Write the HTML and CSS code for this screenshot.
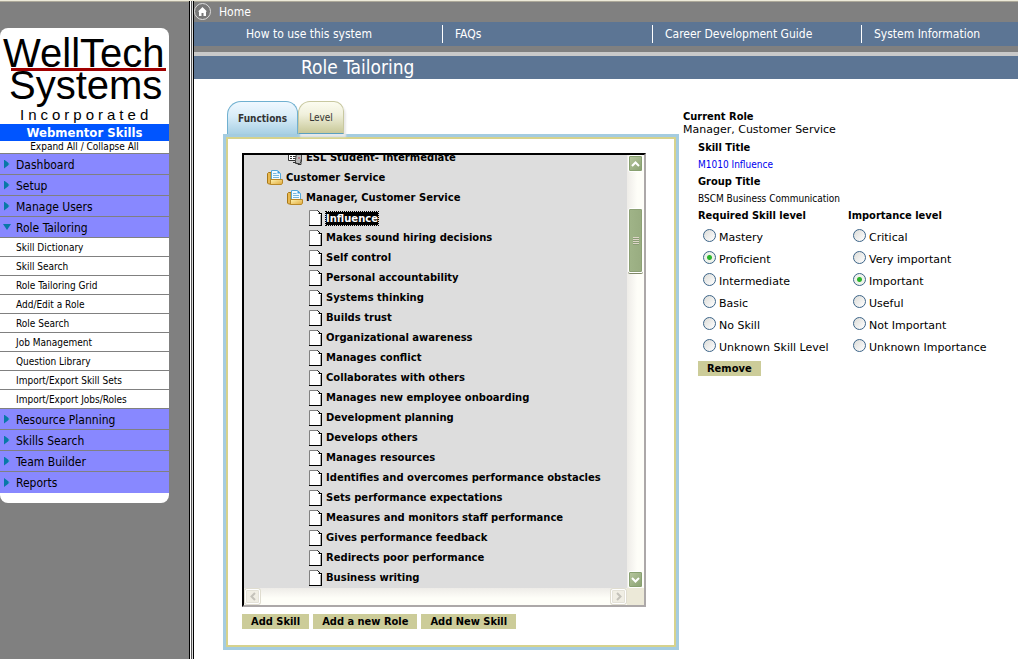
FILE: index.html
```html
<!DOCTYPE html>
<html lang="en">
<head>
<meta charset="utf-8">
<title>Role Tailoring</title>
<link rel="stylesheet" href="styles.css">
</head>
<body>
<svg class="defs" aria-hidden="true">
  <defs>
    <linearGradient id="gold" x1="0" y1="0" x2="1" y2="1"><stop offset="0" stop-color="#fff3b0"/><stop offset="1" stop-color="#e0a838"/></linearGradient>
    <symbol id="folder" viewBox="0 0 16 16">
      <path d="M.5 3.500l1-1h2.500v11.500h-2.500l-1-1z" fill="#e8b850" stroke="#a87818"/>
      <path d="M4.500 .5h6l3 3v7h-9z" fill="#f4fbff" stroke="#58a8d8"/>
      <path d="M10.500 .5v3h3z" fill="#38a0e8"/>
      <path d="M6 3.500h3.500M6 5.500h6M6 7.500h6" stroke="#78b8e0"/>
      <path d="M3.500 9.500h12v3.500l-1 1.500h-11z" fill="url(#gold)" stroke="#b88828"/>
    </symbol>
    <symbol id="page" viewBox="0 0 13 16">
      <path d="M.5 .5h8.500l3 3v12h-11.500z" fill="#fff"/>
      <path d="M.5 15V.5H9" fill="none" stroke="#808080"/>
      <path d="M8.500 .5l4 4M9.500 3.500h3M12.500 3v12.500M0 15.500h13" fill="none" stroke="#000"/>
      <path d="M11.500 5v10" stroke="#b0b0b0"/>
    </symbol>
    <symbol id="group" viewBox="0 0 16 16">
      <path d="M1.500 1.500h10v9h-10z" fill="#fff" stroke="#333"/>
      <path d="M3 4.500h2M6 4.500h3M3 6.500h2M6 6.500h3M3 8.500h2M6 8.500h3" stroke="#333"/>
      <path d="M9.500 2.500h5v9l-2 2h-4v-3z" fill="#b8b8b8" stroke="#444"/>
      <path d="M6 12.500h3l2 2h3v-5" fill="none" stroke="#333"/><path d="M11 8h2" stroke="#b04050"/>
    </symbol>
  </defs>
</svg>
<div class="page">
  <aside class="sidebar">
    <div class="card">
      <svg class="logo" viewBox="0 0 169 96" role="img" aria-label="WellTech Systems Incorporated">
        <text class="logo-big" x="3" y="39">WellTech</text>
        <rect x="11" y="40" width="155" height="3" fill="#a00000"/>
        <text class="logo-big" x="9" y="71">Systems</text>
        <text class="logo-small" x="20" y="92">Incorporated</text>
      </svg>
      <div class="brand">Webmentor Skills</div>
      <div class="expand"><a href="#">Expand All</a> / <a href="#">Collapse All</a></div>
      <nav class="menu">
        <a class="top" href="#"><i class="arrow"></i>Dashboard</a>
        <a class="top" href="#"><i class="arrow"></i>Setup</a>
        <a class="top" href="#"><i class="arrow"></i>Manage Users</a>
        <a class="top" href="#"><i class="arrow open"></i>Role Tailoring</a>
        <a class="sub" href="#">Skill Dictionary</a>
        <a class="sub" href="#">Skill Search</a>
        <a class="sub" href="#">Role Tailoring Grid</a>
        <a class="sub" href="#">Add/Edit a Role</a>
        <a class="sub" href="#">Role Search</a>
        <a class="sub" href="#">Job Management</a>
        <a class="sub" href="#">Question Library</a>
        <a class="sub" href="#">Import/Export Skill Sets</a>
        <a class="sub" href="#">Import/Export Jobs/Roles</a>
        <a class="top" href="#"><i class="arrow"></i>Resource Planning</a>
        <a class="top" href="#"><i class="arrow"></i>Skills Search</a>
        <a class="top" href="#"><i class="arrow"></i>Team Builder</a>
        <a class="top" href="#"><i class="arrow"></i>Reports</a>
      </nav>
    </div>
  </aside>
  <div class="splitter"></div>
  <main class="main">
    <header>
      <a class="home" href="#">
        <svg width="17" height="17" viewBox="0 0 17 17" aria-hidden="true"><circle cx="8.500" cy="8.500" r="8" fill="#787878" stroke="#ddd"/><path d="M8.500 4L13 8.500H12V13H9.500v-3h-2v3H5V8.500H4z" fill="#fff"/></svg>
        Home
      </a>
      <nav class="links">
        <a href="#">How to use this system</a>
        <a href="#">FAQs</a>
        <a href="#">Career Development Guide</a>
        <a href="#">System Information</a>
      </nav>
      <h1 class="title">Role Tailoring</h1>
    </header>
    <div class="content">
      <section class="left">
        <div class="tabs">
          <button class="tab active">Functions</button>
          <button class="tab">Level</button>
        </div>
        <div class="panel">
          <div class="tree-box">
            <div class="viewport">
              <ul class="tree">
                <li class="l2"><svg width="16" height="16"><use href="#group"/></svg><span>ESL Student- Intermediate</span></li>
                <li class="l1"><svg width="16" height="16"><use href="#folder"/></svg><span>Customer Service</span></li>
                <li class="l2"><svg width="16" height="16"><use href="#folder"/></svg><span>Manager, Customer Service</span></li>
                <li class="l3"><svg width="13" height="16"><use href="#page"/></svg><span class="selected">Influence</span></li>
                <li class="l3"><svg width="13" height="16"><use href="#page"/></svg><span>Makes sound hiring decisions</span></li>
                <li class="l3"><svg width="13" height="16"><use href="#page"/></svg><span>Self control</span></li>
                <li class="l3"><svg width="13" height="16"><use href="#page"/></svg><span>Personal accountability</span></li>
                <li class="l3"><svg width="13" height="16"><use href="#page"/></svg><span>Systems thinking</span></li>
                <li class="l3"><svg width="13" height="16"><use href="#page"/></svg><span>Builds trust</span></li>
                <li class="l3"><svg width="13" height="16"><use href="#page"/></svg><span>Organizational awareness</span></li>
                <li class="l3"><svg width="13" height="16"><use href="#page"/></svg><span>Manages conflict</span></li>
                <li class="l3"><svg width="13" height="16"><use href="#page"/></svg><span>Collaborates with others</span></li>
                <li class="l3"><svg width="13" height="16"><use href="#page"/></svg><span>Manages new employee onboarding</span></li>
                <li class="l3"><svg width="13" height="16"><use href="#page"/></svg><span>Development planning</span></li>
                <li class="l3"><svg width="13" height="16"><use href="#page"/></svg><span>Develops others</span></li>
                <li class="l3"><svg width="13" height="16"><use href="#page"/></svg><span>Manages resources</span></li>
                <li class="l3"><svg width="13" height="16"><use href="#page"/></svg><span>Identifies and overcomes performance obstacles</span></li>
                <li class="l3"><svg width="13" height="16"><use href="#page"/></svg><span>Sets performance expectations</span></li>
                <li class="l3"><svg width="13" height="16"><use href="#page"/></svg><span>Measures and monitors staff performance</span></li>
                <li class="l3"><svg width="13" height="16"><use href="#page"/></svg><span>Gives performance feedback</span></li>
                <li class="l3"><svg width="13" height="16"><use href="#page"/></svg><span>Redirects poor performance</span></li>
                <li class="l3"><svg width="13" height="16"><use href="#page"/></svg><span>Business writing</span></li>
              </ul>
            </div>
            <div class="vbar">
              <button class="sb" aria-label="Scroll up"><svg width="9" height="6" viewBox="0 0 9 6"><path d="M1 5l3.500-3.500L8 5"/></svg></button>
              <div class="thumb"><i></i></div>
              <button class="sb" aria-label="Scroll down"><svg width="9" height="6" viewBox="0 0 9 6"><path d="M1 1l3.500 3.500L8 1"/></svg></button>
            </div>
            <div class="hbar">
              <button class="sb off" aria-label="Scroll left" disabled><svg width="6" height="9" viewBox="0 0 6 9"><path d="M5 1L1.500 4.500 5 8"/></svg></button>
              <button class="sb off" aria-label="Scroll right" disabled><svg width="6" height="9" viewBox="0 0 6 9"><path d="M1 1l3.500 3.500L1 8"/></svg></button>
            </div>
          </div>
          <div class="actions">
            <button class="btn">Add Skill</button>
            <button class="btn">Add a new Role</button>
            <button class="btn">Add New Skill</button>
          </div>
        </div>
      </section>
      <section class="details">
        <h2>Current Role</h2>
        <p class="role">Manager, Customer Service</p>
        <div class="fields">
          <h2>Skill Title</h2>
          <a class="value" href="#">M1010 Influence</a>
          <h2>Group Title</h2>
          <p class="value">BSCM Business Communication</p>
          <div class="levels">
            <fieldset>
              <legend>Required Skill level</legend>
              <label><input type="radio" name="skill"><span>Mastery</span></label>
              <label><input type="radio" name="skill" checked><span>Proficient</span></label>
              <label><input type="radio" name="skill"><span>Intermediate</span></label>
              <label><input type="radio" name="skill"><span>Basic</span></label>
              <label><input type="radio" name="skill"><span>No Skill</span></label>
              <label><input type="radio" name="skill"><span>Unknown Skill Level</span></label>
            </fieldset>
            <fieldset>
              <legend>Importance level</legend>
              <label><input type="radio" name="imp"><span>Critical</span></label>
              <label><input type="radio" name="imp"><span>Very important</span></label>
              <label><input type="radio" name="imp" checked><span>Important</span></label>
              <label><input type="radio" name="imp"><span>Useful</span></label>
              <label><input type="radio" name="imp"><span>Not Important</span></label>
              <label><input type="radio" name="imp"><span>Unknown Importance</span></label>
            </fieldset>
          </div>
          <button class="btn">Remove</button>
        </div>
      </section>
    </div>
  </main>
</div>
</body>
</html>
```

FILE: styles.css
```css
:root {
  --narrow: "DejaVu Sans Condensed", "Noto Sans", sans-serif;
  --wide: "DejaVu Sans", sans-serif;
}
* { box-sizing: border-box; }
body { margin: 0; background: #fff; color: #000; font: 11px/17px var(--narrow); }
a { color: inherit; text-decoration: none; }
button { font: inherit; color: inherit; border: 0; padding: 0; cursor: pointer; }
h1, h2, p, ul { margin: 0; padding: 0; }
svg { display: block; flex: none; }
.defs { position: absolute; width: 0; height: 0; }

.page { display: flex; min-height: 100vh; border-top: 1px solid #ece9d8; }
.sidebar { flex: none; width: 189px; padding-top: 27px; background: #808080; box-shadow: inset 0 1px #aca899; }
.splitter { flex: none; width: 5px; border: solid #000; border-width: 0 1px; background: linear-gradient(90deg, #fff 1px, #555 1px, #555 2px, #ddd 2px); }

.card { width: 169px; padding-bottom: 10px; background: #fff; border-radius: 8px; overflow: hidden; }
.logo { width: 100%; }
.logo-big { font: 40px "Liberation Sans", sans-serif; }
.logo-small { font: 15px "Liberation Sans", sans-serif; letter-spacing: 4px; }
.brand { background: #0055ff; color: #fff; font-size: 13px; font-weight: bold; text-align: center; }
.expand { font-size: 10px; line-height: 12px; text-align: center; border-bottom: 1px solid #808080; }
.menu { display: flex; flex-direction: column; }
.top { display: flex; align-items: center; height: 21px; padding-top: 2px; background: #8888ff; border-bottom: 1px solid #808080; font-size: 12px; }
.top:last-child { border-bottom: 0; }
.sub { height: 19px; padding-left: 16px; border-bottom: 1px solid #808080; font-size: 10px; line-height: 20px; }
.arrow { width: 6px; height: 9px; margin: 0 6px 2px 4px; background: linear-gradient(90deg, #0878a8 60%, #58b8d8); clip-path: polygon(0 0, 100% 50%, 0 100%); }
.arrow.open { width: 8px; height: 6px; margin: 0 5px 2px 3px; background: #0878a8; clip-path: polygon(0 0, 100% 0, 50% 100%); }

.main { flex: 1; min-width: 0; }
header { background: #808080; color: #fff; box-shadow: inset 0 1px #aca899; }
.home { display: flex; align-items: center; gap: 8px; height: 21px; font-size: 12px; line-height: 20px; }
.links { display: grid; grid-template-columns: 248fr 210fr 209fr 157fr; align-items: center; height: 24px; background: #5c7594; font-size: 12px; line-height: 18px; }
.links a { padding-left: 12px; border-left: 1px solid #fff; white-space: nowrap; }
.links a:first-child { border: 0; padding-left: 52px; }
.title { margin-top: 6px; padding-left: 107px; border-top: 4px solid #c9c9c9; background: #5c7594; font-size: 19px; font-weight: normal; line-height: 23px; }

.content { display: flex; align-items: flex-start; gap: 4px; padding-left: 29px; }
.left { flex: 0 1 456px; min-width: 0; padding-top: 22px; }
.tabs { display: flex; align-items: flex-end; padding-left: 4px; }
.tab { height: 33px; padding: 0 10px; border: 1px solid #c8c8a0; border-bottom-color: #5aa0c0; border-radius: 12px 10px 0 0; background: linear-gradient(#fcfcf0, #f0f0dc 40%, #c8c898); color: #333; font-size: 10px; box-shadow: 2px 3px 2px #e8e8e8; }
.tab.active { padding: 0 10px; border: 1px solid #70b0d0; border-bottom: 0; border-radius: 14px 12px 0 0; background: linear-gradient(#f0f8ff, #d8ecf8 45%, #a8d0e4); font-weight: bold; box-shadow: none; }
.panel { padding: 16px 30px 18px 16px; border: 3px solid #a4cce0; box-shadow: inset 0 0 0 2px #d6d28c; }
.tree-box { display: grid; grid-template-columns: 1fr 17px; border: 2px solid #000; border-right-color: #aca8a8; border-bottom-color: #aca8a8; background: #ece9d8; }
.viewport { overflow: hidden; background: #ddd; }
.tree { margin-top: -7px; list-style: none; font: bold 10px/20px var(--wide); white-space: nowrap; }
.tree li { display: flex; align-items: center; gap: 3px; height: 20px; }
.l1 { padding-left: 23px; }
.l2 { padding-left: 43px; }
.l3 { padding-left: 65px; }
.tree .l3 { gap: 4px; }
.selected { background: #000; color: #fff; line-height: 13px; outline: 1px dotted #000; }
.vbar { display: flex; flex-direction: column; background: linear-gradient(90deg, #eeece8, #fefef8 60%); }
.thumb { display: flex; align-items: center; justify-content: center; height: 65px; margin: 36px 1px auto 1px; border: 1px solid #fff; border-radius: 2px; background: linear-gradient(90deg, #a0b488, #98ac80); box-shadow: inset 0 0 0 1px #8ca074, 0 1px #808868; }
.thumb i { width: 6px; height: 8px; background: repeating-linear-gradient(#ddd6c8 0 1px, #8a9c74 1px 2px); }
.sb { display: flex; align-items: center; justify-content: center; width: 15px; height: 17px; margin: 0 1px; border: 1px solid #fff; border-radius: 2px; background: linear-gradient(135deg, #b8c8a0, #88a070); box-shadow: inset 0 0 0 1px #88a070; }
.sb path { fill: none; stroke: #fff; stroke-width: 2; }
.hbar { display: flex; justify-content: space-between; background: linear-gradient(#eeece8, #fefef8 60%); }
.sb.off { background: #f0eee4; box-shadow: inset 0 0 0 1px #e4e2d8, 0 0 0 1px #e0ddd0; height: 15px; margin: 1px; }
.sb.off path { stroke: #c4c2ba; }
.actions { display: flex; gap: 4px; margin-top: 7px; }
.btn { padding: 0 9px; background: #cccc99; font-size: 11px; font-weight: bold; line-height: 15px; }

.details { flex: 1; min-width: 0; padding-top: 29px; }
h2, legend { font-size: 11px; font-weight: bold; line-height: 17px; }
.role { font: 11px/13px var(--wide); margin: -2px 0 3px; }
.fields { padding-left: 15px; }
.value { display: block; font-size: 10px; }
a.value { color: #0000ee; }
.levels { display: flex; }
fieldset { min-width: 150px; margin: 0; padding: 0; border: 0; }
legend { padding: 0; }
label { display: flex; align-items: flex-start; gap: 3px; height: 22px; padding: 5px 0 0 5px; font: 11px/17px var(--wide); white-space: nowrap; }
input { appearance: none; width: 13px; height: 13px; margin: 0; border: 1px solid #3c6488; border-radius: 50%; background: linear-gradient(135deg, #dcdcd8, #fff); }
input:checked { background: radial-gradient(circle, #2cb42c 0 2px, #eef2ea 3px); }
.fields .btn { margin-top: 5px; }
```
